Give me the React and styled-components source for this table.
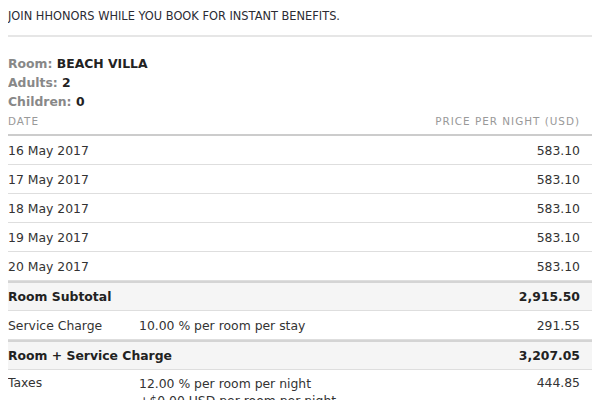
import React from 'react';
import styled, { createGlobalStyle } from 'styled-components';

const GlobalStyle = createGlobalStyle`
    body {
        margin: 8px;
        background: #fff;
        font-family: "DejaVu Sans", Verdana, sans-serif;
        color: #333;
    }
`

const Wrap = styled.div`
    margin-top: -16px;
`
const Notice = styled.p`
    margin: 0;
    font-size: 11.4px;
    line-height: 16px;
    text-transform: uppercase;
    white-space: nowrap;
    overflow: hidden;
    color: #2b2b33;
    padding-bottom: 11px;
    border-bottom: 2px solid #e6e6e6;
`
const Details = styled.div`
    padding-top: 17px;
`
const Detail = styled.div`
    font-size: 12.4px;
    line-height: 19px;
    font-weight: bold;
    color: #888;

    span {
        color: #222;
    }
`
const HeadRow = styled.div`
    display: flex;
    justify-content: space-between;
    font-size: 10.4px;
    letter-spacing: 1px;
    color: #999;
    padding: 4px 12px 7px 0;
    border-bottom: 2px solid #cccccc;
`
const Row = styled.div`
    display: flex;
    align-items: ${p => (p.$top ? 'flex-start' : 'center')};
    height: ${p => (p.$total ? '27px' : '28px')};
    padding: ${p => (p.$top ? '5px' : '0')} 12px 0 0;
    font-size: 12.4px;
    border-bottom: 1px solid #dedede;
    border-top: ${p => (p.$total ? '2px solid #d4d4d4' : '0')};
    background: ${p => (p.$total ? '#f5f5f5' : 'transparent')};
    font-weight: ${p => (p.$total ? 'bold' : 'normal')};
    color: ${p => (p.$total ? '#222' : '#333')};
`
const Label = styled.div`
    width: 131px;
    flex-shrink: 0;
`
const Desc = styled.div`
    flex: 1;
    line-height: 17px;
`
const Amount = styled.div`
    text-align: right;
`

const nights = ['16 May 2017', '17 May 2017', '18 May 2017', '19 May 2017', '20 May 2017'];

const App = () => {
    return (
        <>
            <GlobalStyle />
            <Wrap>
                <Notice>
                    Exclusive lower rate nowhere else. Book in advance &amp; save. Non-refundable.<br />
                    Join HHonors while you book for instant benefits.
                </Notice>
                <Details>
                    <Detail>Room: <span>BEACH VILLA</span></Detail>
                    <Detail>Adults: <span>2</span></Detail>
                    <Detail>Children: <span>0</span></Detail>
                </Details>
                <HeadRow>
                    <span>DATE</span>
                    <span>PRICE PER NIGHT (USD)</span>
                </HeadRow>
                {nights.map(n => (
                    <Row key={n}>
                        <Desc>{n}</Desc>
                        <Amount>583.10</Amount>
                    </Row>
                ))}
                <Row $total>
                    <Desc>Room Subtotal</Desc>
                    <Amount>2,915.50</Amount>
                </Row>
                <Row>
                    <Label>Service Charge</Label>
                    <Desc>10.00 % per room per stay</Desc>
                    <Amount>291.55</Amount>
                </Row>
                <Row $total>
                    <Desc>Room + Service Charge</Desc>
                    <Amount>3,207.05</Amount>
                </Row>
                <Row $top>
                    <Label>Taxes</Label>
                    <Desc>
                        12.00 % per room per night<br />
                        +$0.00 USD per room per night
                    </Desc>
                    <Amount>444.85</Amount>
                </Row>
            </Wrap>
        </>
    )
}

export default App
